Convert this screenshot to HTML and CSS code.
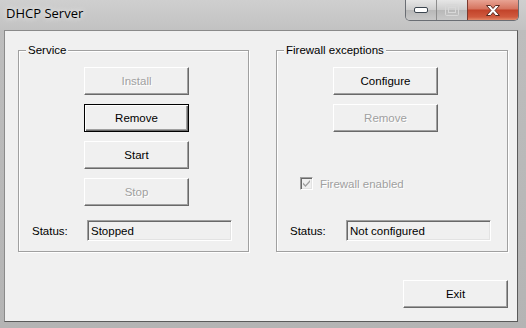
FILE: index.html
```html
<!DOCTYPE html>
<html>
<head>
<meta charset="utf-8">
<link rel="stylesheet" href="styles.css">
</head>
<body>
<div class="window">
  <div class="titlebar">
    <div class="title">DHCP Server</div>
    <div class="caption-buttons">
      <div class="cap cap-min">
        <svg width="14" height="6" viewBox="0 0 14 6"><rect x="0.5" y="0.5" width="13" height="5" rx="1.5" fill="#fff" stroke="#3c4650"/></svg>
      </div>
      <div class="cap cap-max">
        <svg width="14" height="12" viewBox="0 0 14 12"><rect x="0.5" y="0.5" width="13" height="11" rx="1" fill="none" stroke="#d8d8d8"/><rect x="3.5" y="3.5" width="7" height="5" fill="none" stroke="#d8d8d8"/></svg>
      </div>
      <div class="cap cap-close">
        <svg width="16" height="13" viewBox="0 0 16 13"><path d="M1.5 1.5h4l2.5 3 2.5-3h4l-4.5 5 4.5 5h-4l-2.5-3-2.5 3h-4l4.5-5z" fill="#fff" stroke="#5a2a20" stroke-width="1" stroke-linejoin="round"/></svg>
      </div>
    </div>
  </div>
  <div class="client">
    <div class="groups">
      <div class="group group-service">
        <span class="group-label">Service</span>
        <div class="btn-col">
          <div class="btn disabled">Install</div>
          <div class="btn default">Remove</div>
          <div class="btn">Start</div>
          <div class="btn disabled">Stop</div>
        </div>
        <div class="status-row">
          <span class="status-label">Status:</span>
          <div class="textbox">Stopped</div>
        </div>
      </div>
      <div class="group group-firewall">
        <span class="group-label">Firewall exceptions</span>
        <div class="btn-col">
          <div class="btn">Configure</div>
          <div class="btn disabled">Remove</div>
        </div>
        <div class="check-row">
          <span class="checkbox">
            <svg width="9" height="9" viewBox="0 0 9 9"><path d="M1 3.5l2.5 2.5 4.5-5v2l-4.5 5-2.5-2.5z" fill="#a0a0a0"/></svg>
          </span>
          <span class="check-label">Firewall enabled</span>
        </div>
        <div class="status-row">
          <span class="status-label">Status:</span>
          <div class="textbox">Not configured</div>
        </div>
      </div>
    </div>
    <div class="footer">
      <div class="btn">Exit</div>
    </div>
  </div>
</div>
</body>
</html>
```
FILE: styles.css
```css
html, body {
  margin: 0;
  padding: 0;
  background: #a8a8a8;
}
.window {
  width: 526px;
  height: 328px;
  display: flex;
  flex-direction: column;
  background: linear-gradient(to bottom, #c4c4c4 0px, #bdbdbd 30px, #b4b4b4 100%);
  overflow: hidden;
}
.titlebar {
  height: 30px;
  display: flex;
  align-items: flex-start;
  padding-right: 7px;
  background: linear-gradient(to bottom, #cfcfcf, #c2c2c2);
}
.title {
  font-family: "Open Sans", "Noto Sans", sans-serif;
  font-size: 13px;
  color: #000;
  margin: 4px 0 0 6px;
  text-shadow: 0 0 6px #e8e8e8, 0 0 4px #e8e8e8;
}
.caption-buttons {
  margin-left: auto;
  display: flex;
  height: 20px;
  border: 1px solid #6a6e74;
  border-top: none;
  border-radius: 0 0 5px 5px;
  overflow: hidden;
}
.cap {
  display: flex;
  align-items: center;
  justify-content: center;
  height: 20px;
}
.cap-min {
  width: 30px;
  background: linear-gradient(to bottom, #e6e6e6, #cdcdcd 50%, #b8b8b8 51%, #c8c8c8);
  border-right: 1px solid #8c8c8c;
}
.cap-max {
  width: 30px;
  background: linear-gradient(to bottom, #e6e6e6, #cdcdcd 50%, #b8b8b8 51%, #c8c8c8);
  border-right: 1px solid #7a3a30;
}
.cap-close {
  width: 50px;
  background: linear-gradient(to bottom, #e8a393, #d5735e 45%, #c2432a 50%, #d05a3e 85%, #e38a6a);
}
.client {
  margin: 0 8px 6px 4px;
  flex: 1;
  background: #f0f0f0;
  border: 1px solid;
  border-color: #8a8a8a #5a5a5a #5a5a5a #8a8a8a;
  display: flex;
  flex-direction: column;
  font-family: "Liberation Sans", Arial, sans-serif;
  font-size: 11.5px;
  color: #000;
}
.groups {
  display: flex;
  gap: 27px;
  margin: 19px 0 0 13px;
}
.group {
  position: relative;
  box-sizing: border-box;
  height: 202px;
  border: 1px solid #a0a0a0;
  box-shadow: 1px 1px 0 #fff, inset 1px 1px 0 #fff;
  display: flex;
  flex-direction: column;
  padding: 16px 0 10px 0;
}
.group-service { width: 231px; }
.group-firewall { width: 232px; }
.group-label {
  position: absolute;
  top: -8px;
  left: 7px;
  padding: 0 2px;
  background: #f0f0f0;
  line-height: 14px;
}
.btn-col {
  display: flex;
  flex-direction: column;
  gap: 9px;
}
.group-service .btn-col { margin-left: 65px; }
.group-firewall .btn-col { margin-left: 56px; }
.btn {
  box-sizing: border-box;
  width: 105px;
  height: 28px;
  display: flex;
  align-items: center;
  justify-content: center;
  border: 1px solid;
  border-color: #fff #696969 #696969 #fff;
  box-shadow: inset -1px -1px 0 #a0a0a0, inset 1px 1px 0 #f0f0f0;
  background: #f0f0f0;
}
.btn.default {
  border-color: #000;
  box-shadow: inset 1px 1px 0 #fff, inset -1px -1px 0 #696969, inset -2px -2px 0 #a0a0a0;
}
.btn.disabled {
  color: #a0a0a0;
  text-shadow: 1px 1px 0 #fff;
}
.check-row {
  display: flex;
  align-items: center;
  margin: 45px 0 0 23px;
  color: #a0a0a0;
  text-shadow: 1px 1px 0 #fff;
}
.checkbox {
  box-sizing: border-box;
  width: 13px;
  height: 13px;
  border: 1px solid;
  border-color: #a0a0a0 #fff #fff #a0a0a0;
  box-shadow: inset 1px 1px 0 #696969, inset -1px -1px 0 #e3e3e3;
  background: #f0f0f0;
  display: flex;
  align-items: center;
  justify-content: center;
  margin-right: 7px;
}
.status-row {
  margin-top: auto;
  display: flex;
  align-items: center;
  padding-left: 13px;
}
.status-label {
  width: 55px;
}
.group-firewall .status-label { width: 56px; }
.textbox {
  box-sizing: border-box;
  width: 145px;
  height: 21px;
  border: 1px solid;
  border-color: #a0a0a0 #fff #fff #a0a0a0;
  box-shadow: inset 1px 1px 0 #696969, inset -1px -1px 0 #e3e3e3;
  padding: 0 0 0 3px;
  display: flex;
  align-items: center;
}
.footer {
  margin-top: auto;
  display: flex;
  justify-content: flex-end;
  padding: 0 9px 13px 0;
}
```
